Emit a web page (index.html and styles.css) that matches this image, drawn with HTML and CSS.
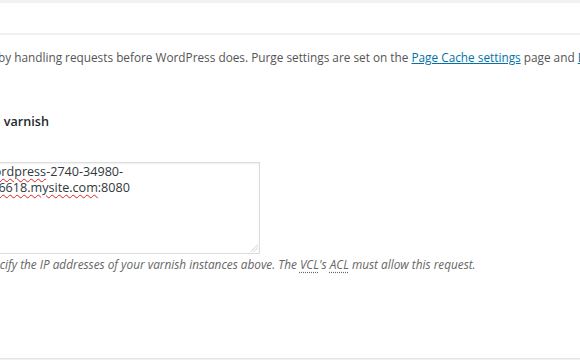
FILE: index.html
```html
<!DOCTYPE html>
<html lang="en">
<head>
    <meta charset="UTF-8">
    <meta name="viewport" content="width=device-width, initial-scale=1.0">
    <title>Reverse Proxy</title>
    <link rel="stylesheet" href="styles.css">
</head>
<body>
    <div class="postbox">
        <div class="postbox-header">
            <h3 class="postbox-title">Reverse Proxy</h3>
        </div>
        <div class="inside">
            <p class="intro">
                by handling requests before WordPress does. Purge settings are set on the
                <a href="#">Page Cache settings</a> page and <a href="#">Browser Cache settings</a>
            </p>

            <div class="field">
                <h4 class="field-label">via varnish</h4>

                <!-- server list, shown like a textarea so the spellcheck marks stay -->
                <div class="servers">
                    <div class="servers-text">
                        <span class="typo">wordpress</span>-2740-34980-<br>
                        <span class="typo">116618.mysite.com</span>:8080
                    </div>
                    <svg class="grip" width="8" height="8" viewBox="0 0 8 8">
                        <line x1="7.5" y1="1" x2="1" y2="7.5" stroke="#999" stroke-width="1" stroke-dasharray="1 1"/>
                        <line x1="7.5" y1="4" x2="4" y2="7.5" stroke="#999" stroke-width="1" stroke-dasharray="1 1"/>
                    </svg>
                </div>

                <p class="description">
                    Specify the IP addresses of your varnish instances above. The
                    <abbr title="Varnish Configuration Language">VCL</abbr>'s
                    <abbr title="Access Control List">ACL</abbr> must allow this request.
                </p>
            </div>
        </div>
    </div>
</body>
</html>
```

FILE: styles.css
```css
body {
    margin: 0;
    padding: 3px 0 0;
    background-color: #f1f1f1;
    font-family: "Open Sans", Arial, sans-serif;
    font-size: 11.8px;
    color: #555;
    overflow: hidden;
}

.postbox {
    background-color: #fff;
    border-bottom: 1px solid #e5e5e5;
    height: 355px;
    overflow: hidden;
}

.postbox-header {
    height: 30px;
    border-bottom: 2px solid #f1f1f1;
}

.postbox-title {
    margin: 0;
    padding: 6px 0 0 12px;
    font-size: 13px;
    line-height: 20px;
    visibility: hidden;
}

.inside {
    margin-left: -24px;
    padding-top: 13px;
}

.intro {
    margin: 0;
    line-height: 18px;
    white-space: nowrap;
    text-indent: 22px;
}

.intro a {
    color: #0073aa;
}

.field {
    padding-top: 48px;
}

.field-label {
    margin: 0 0 0 7px;
    font-size: 12.6px;
    font-weight: 600;
    line-height: 16px;
    color: #23282d;
}

.servers {
    position: relative;
    width: 282px;
    height: 90px;
    margin-top: 32px;
    border: 1px solid #ddd;
    box-shadow: inset 0 1px 2px rgba(0, 0, 0, 0.07);
    background-color: #fff;
}

.servers-text {
    padding: 1px 7px;
    font-size: 12.6px;
    line-height: 16px;
    color: #32373c;
}

.typo {
    text-decoration: underline wavy #e02020;
    text-decoration-thickness: 1px;
    text-underline-offset: 2px;
}

.grip {
    position: absolute;
    right: 1px;
    bottom: 1px;
}

.description {
    margin: 1px 0 0;
    font-style: italic;
    font-size: 11.8px;
    line-height: 18px;
    color: #666;
    text-indent: 5px;
}

.description abbr {
    text-decoration: underline dotted;
    text-underline-offset: 3px;
}
```
